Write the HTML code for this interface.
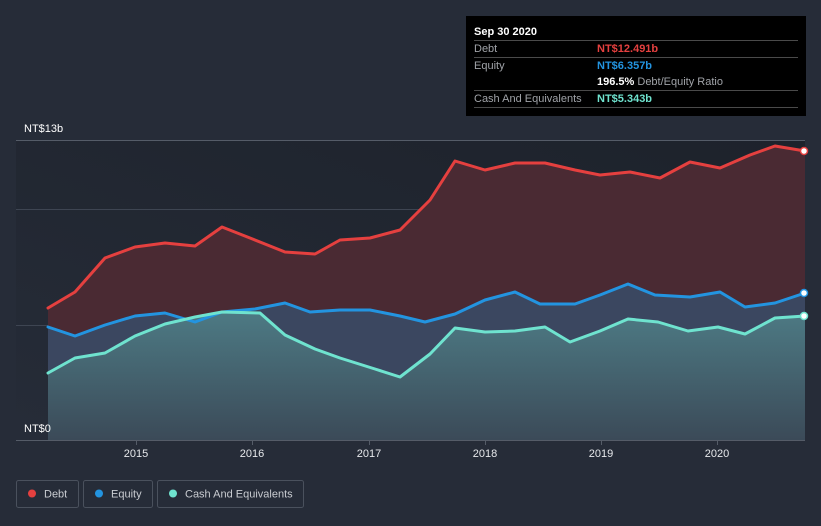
<!DOCTYPE html>
<html><head><meta charset="utf-8"><style>
body{margin:0;width:821px;height:526px;background:#262c38;overflow:hidden;font-family:"Liberation Sans",sans-serif}
</style></head><body>
<svg width="821" height="526" viewBox="0 0 821 526" xmlns="http://www.w3.org/2000/svg" style="position:absolute;left:0;top:0">
<defs>
<linearGradient id="bg" x1="0" y1="1" x2="1" y2="0"><stop offset="0" stop-color="#262c38"/><stop offset="1" stop-color="#1d222b"/></linearGradient>
<linearGradient id="cash" x1="0" y1="0" x2="0" y2="1"><stop offset="0" stop-color="#4d7a84"/><stop offset="1" stop-color="#3b4a58"/></linearGradient>
</defs>
<rect x="16" y="140" width="789" height="300" fill="url(#bg)"/>
<g stroke="#3e4552" stroke-width="1"><line x1="16" y1="209.5" x2="805" y2="209.5"/><line x1="16" y1="325.5" x2="805" y2="325.5"/></g>
<line x1="16" y1="140.5" x2="805" y2="140.5" stroke="#555c68"/>
<polygon fill="#4a2a33" points="48,308 75,292 105,258 135,247 165,243 195,246 222,227 250,238 285,252 315,254 340,240 370,238 400,230 430,200 455,161 485,170 515,163 545,163 575,170 600,175 630,172 660,178 690,162 720,168 750,155 775,146 805,151 805,440 48,440"/>
<polygon fill="#3b4760" points="48,327 75,336 105,325 135,316 165,313 195,322 222,312 255,309 285,303 310,312 340,310 370,310 400,316 425,322 455,314 485,300 515,292 540,304 575,304 600,295 628,284 655,295 690,297 720,292 745,307 775,303 805,293 805,440 48,440"/>
<polygon fill="url(#cash)" points="48,373 75,358 105,353 135,336 165,324 195,317 222,312 260,313 285,335 315,349 340,358 375,369 400,377 430,354 455,328 485,332 515,331 545,327 570,342 600,331 628,319 658,322 688,331 718,327 745,334 775,318 805,316 805,440 48,440"/>
<g fill="none" stroke-width="3" stroke-linejoin="round" stroke-linecap="round">
<polyline stroke="#e5403f" points="48,308 75,292 105,258 135,247 165,243 195,246 222,227 250,238 285,252 315,254 340,240 370,238 400,230 430,200 455,161 485,170 515,163 545,163 575,170 600,175 630,172 660,178 690,162 720,168 750,155 775,146 805,151"/>
<polyline stroke="#2394e0" points="48,327 75,336 105,325 135,316 165,313 195,322 222,312 255,309 285,303 310,312 340,310 370,310 400,316 425,322 455,314 485,300 515,292 540,304 575,304 600,295 628,284 655,295 690,297 720,292 745,307 775,303 805,293"/>
<polyline stroke="#6fe3cf" points="48,373 75,358 105,353 135,336 165,324 195,317 222,312 260,313 285,335 315,349 340,358 375,369 400,377 430,354 455,328 485,332 515,331 545,327 570,342 600,331 628,319 658,322 688,331 718,327 745,334 775,318 805,316"/>
</g>
<circle cx="804" cy="151" r="3.5" fill="#fff" stroke="#e5403f" stroke-width="1.5"/>
<circle cx="804" cy="293" r="3.5" fill="#fff" stroke="#2394e0" stroke-width="1.5"/>
<circle cx="804" cy="316" r="3.5" fill="#fff" stroke="#6fe3cf" stroke-width="1.5"/>
<line x1="16" y1="440.5" x2="805" y2="440.5" stroke="#555c68"/>
<g stroke="#555c68"><line x1="136.5" y1="440" x2="136.5" y2="445"/><line x1="252.5" y1="440" x2="252.5" y2="445"/><line x1="369.5" y1="440" x2="369.5" y2="445"/><line x1="485.5" y1="440" x2="485.5" y2="445"/><line x1="601.5" y1="440" x2="601.5" y2="445"/><line x1="717.5" y1="440" x2="717.5" y2="445"/></g>
<g fill="#fff" font-size="11">
<text x="24" y="132">NT$13b</text><text x="24" y="432">NT$0</text>
</g>
<g fill="#e6e8eb" font-size="11" text-anchor="middle">
<text x="136" y="457">2015</text><text x="252" y="457">2016</text><text x="369" y="457">2017</text><text x="485" y="457">2018</text><text x="601" y="457">2019</text><text x="717" y="457">2020</text>
</g>
<g fill="none" stroke="#4a515d"><rect x="16.5" y="480.5" width="62" height="27" rx="2"/><rect x="83.5" y="480.5" width="69" height="27" rx="2"/><rect x="157.5" y="480.5" width="146" height="27" rx="2"/></g>
<circle cx="32" cy="493.5" r="4" fill="#e5403f"/><circle cx="99" cy="493.5" r="4" fill="#2394e0"/><circle cx="173" cy="493.5" r="4" fill="#6fe3cf"/>
<g fill="#c9ccd1" font-size="11"><text x="44" y="497.5">Debt</text><text x="111" y="497.5">Equity</text><text x="185" y="497.5">Cash And Equivalents</text></g>
<rect x="466" y="16" width="340" height="100" fill="#000"/>
<g stroke="#4a4a4a"><line x1="474" y1="40.5" x2="798" y2="40.5"/><line x1="474" y1="57.5" x2="798" y2="57.5"/><line x1="474" y1="90.5" x2="798" y2="90.5"/><line x1="474" y1="107.5" x2="798" y2="107.5"/></g>
<g font-size="11">
<text x="474" y="35" fill="#fff" font-weight="bold">Sep 30 2020</text>
<text x="474" y="52" fill="#a0a3a8">Debt</text><text x="597" y="52" fill="#e5403f" font-weight="bold">NT$12.491b</text>
<text x="474" y="69" fill="#a0a3a8">Equity</text><text x="597" y="69" fill="#2394e0" font-weight="bold">NT$6.357b</text>
<text x="597" y="85" fill="#fff"><tspan font-weight="bold">196.5%</tspan><tspan fill="#a0a3a8"> Debt/Equity Ratio</tspan></text>
<text x="474" y="102" fill="#a0a3a8">Cash And Equivalents</text><text x="597" y="102" fill="#6fe3cf" font-weight="bold">NT$5.343b</text>
</g>
</svg>
</body></html>
